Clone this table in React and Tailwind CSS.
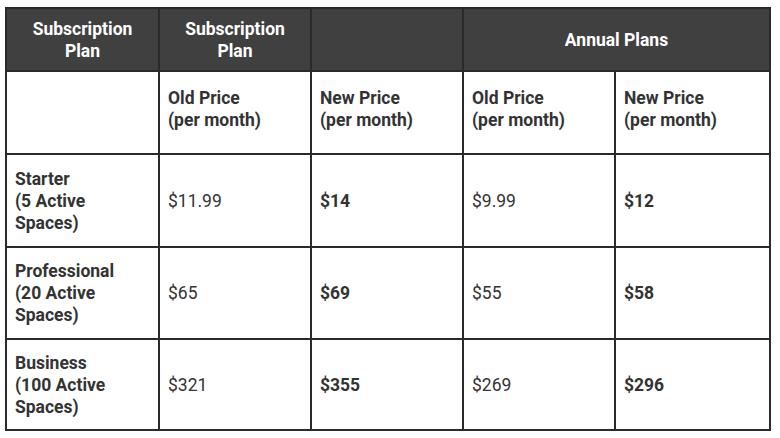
export default function App() {
  const rows = [
    { plan: ["Starter", "(5 Active", "Spaces)"], v: ["$11.99", "$14", "$9.99", "$12"], h: "h-[93px]" },
    { plan: ["Professional", "(20 Active", "Spaces)"], v: ["$65", "$69", "$55", "$58"], h: "h-[92px]" },
    { plan: ["Business", "(100 Active", "Spaces)"], v: ["$321", "$355", "$269", "$296"], h: "h-[91px]" },
  ];
  const td = "border-2 border-[#2a2a2a] px-[8px] align-middle text-left";
  const th = "border-2 border-[#2a2a2a] px-[8px] align-middle text-center font-bold text-white";
  return (
    <div className="w-[780px] h-[438px] bg-white pl-[5px] pt-[7px]" style={{ fontFamily: "Roboto, 'Liberation Sans', sans-serif" }}>
      <table className="table-fixed border-collapse w-[764px] text-[17.5px] leading-[22px] text-[#333]">
        <colgroup>
          <col className="w-[153px]" />
          <col className="w-[152px]" />
          <col className="w-[152px]" />
          <col className="w-[152px]" />
          <col className="w-[155px]" />
        </colgroup>
        <thead>
          <tr className="h-[63px] bg-[#404040]">
            <th className={th}>Subscription<br />Plan</th>
            <th className={th}>Subscription<br />Plan</th>
            <th className={th}></th>
            <th className={th} colSpan={2}>Annual Plans</th>
          </tr>
        </thead>
        <tbody>
          <tr className="h-[83px]">
            <td className={td}></td>
            <td className={`${td} font-bold pb-[8px]`}>Old Price<br />(per month)</td>
            <td className={`${td} font-bold pb-[8px]`}>New Price<br />(per month)</td>
            <td className={`${td} font-bold pb-[8px]`}>Old Price<br />(per month)</td>
            <td className={`${td} font-bold pb-[8px]`}>New Price<br />(per month)</td>
          </tr>
          {rows.map((r, i) => (
            <tr key={i} className={r.h}>
              <td className={`${td} font-bold`}>{r.plan[0]}<br />{r.plan[1]}<br />{r.plan[2]}</td>
              <td className={td}>{r.v[0]}</td>
              <td className={`${td} font-bold`}>{r.v[1]}</td>
              <td className={td}>{r.v[2]}</td>
              <td className={`${td} font-bold`}>{r.v[3]}</td>
            </tr>
          ))}
        </tbody>
      </table>
    </div>
  );
}
